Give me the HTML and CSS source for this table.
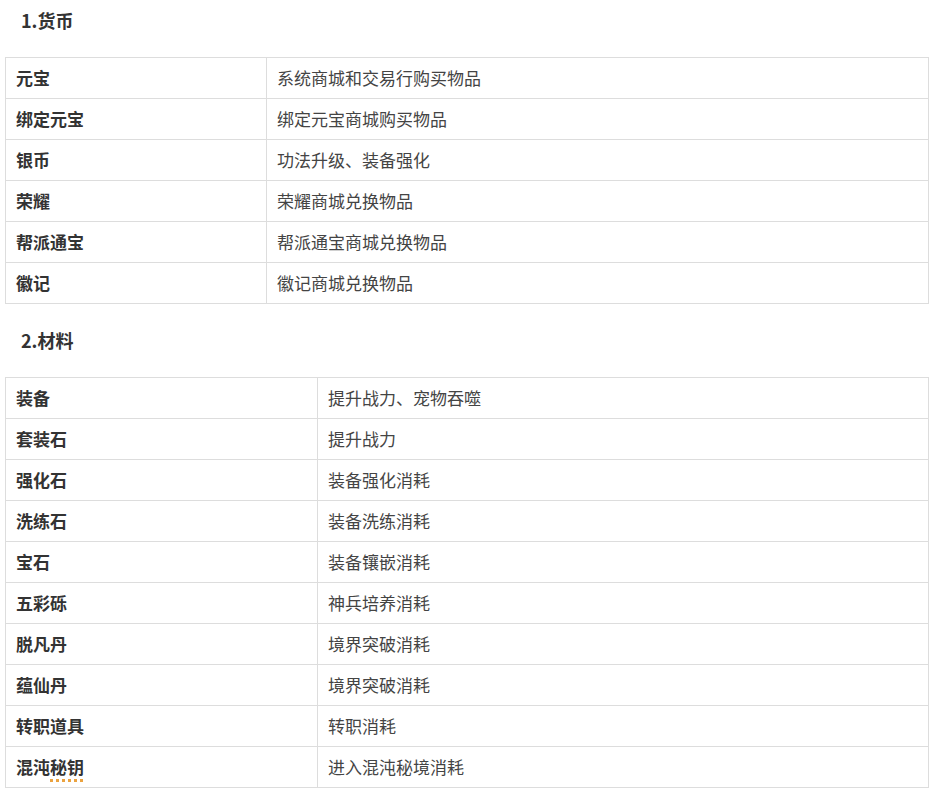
FILE: index.html
```html
<!DOCTYPE html>
<html lang="zh-CN">
<head>
<meta charset="utf-8">
<title>货币与材料</title>
<link rel="stylesheet" href="styles.css">
</head>
<body>
<div class="page">
  <h3 class="sec-title first">1.货币</h3>
  <table class="info-table currency">
    <tr><th>元宝</th><td>系统商城和交易行购买物品</td></tr>
    <tr><th>绑定元宝</th><td>绑定元宝商城购买物品</td></tr>
    <tr><th>银币</th><td>功法升级、装备强化</td></tr>
    <tr><th>荣耀</th><td>荣耀商城兑换物品</td></tr>
    <tr><th>帮派通宝</th><td>帮派通宝商城兑换物品</td></tr>
    <tr><th>徽记</th><td>徽记商城兑换物品</td></tr>
  </table>

  <h3 class="sec-title">2.材料</h3>
  <table class="info-table material">
    <tr><th>装备</th><td>提升战力、宠物吞噬</td></tr>
    <tr><th>套装石</th><td>提升战力</td></tr>
    <tr><th>强化石</th><td>装备强化消耗</td></tr>
    <tr><th>洗练石</th><td>装备洗练消耗</td></tr>
    <tr><th>宝石</th><td>装备镶嵌消耗</td></tr>
    <tr><th>五彩砾</th><td>神兵培养消耗</td></tr>
    <tr><th>脱凡丹</th><td>境界突破消耗</td></tr>
    <tr><th>蕴仙丹</th><td>境界突破消耗</td></tr>
    <tr><th>转职道具</th><td>转职消耗</td></tr>
    <tr><th>混沌<span class="mark">秘钥</span></th><td>进入混沌秘境消耗</td></tr>
  </table>
</div>
</body>
</html>
```

FILE: styles.css
```css
html, body {
  margin: 0;
  padding: 0;
  background: #fff;
}

body {
  font-family: "Noto Sans CJK SC", "Noto Sans", sans-serif;
  color: #444;
}

.page {
  padding: 0 5px;
}

.sec-title {
  margin: 24px 0 25px 0;
  padding-left: 16px;
  font-size: 18px;
  line-height: 24px;
  font-weight: bold;
  color: #333;
}

.sec-title.first {
  margin-top: 8px;
}

.info-table {
  width: 924px;
  border-collapse: collapse;
  table-layout: fixed;
}

.info-table th,
.info-table td {
  border: 1px solid #ddd;
  height: 41px;
  padding: 0 10px;
  box-sizing: border-box;
  font-size: 17px;
  line-height: 24px;
  text-align: left;
  vertical-align: middle;
}

.info-table th {
  font-weight: bold;
  color: #333;
}

.info-table td {
  font-weight: normal;
  color: #444;
}

.currency th { width: 261px; }
.material th { width: 312px; }

.mark {
  text-decoration: underline dotted #eba340;
  text-decoration-thickness: 3px;
  text-underline-offset: 5px;
}
```
